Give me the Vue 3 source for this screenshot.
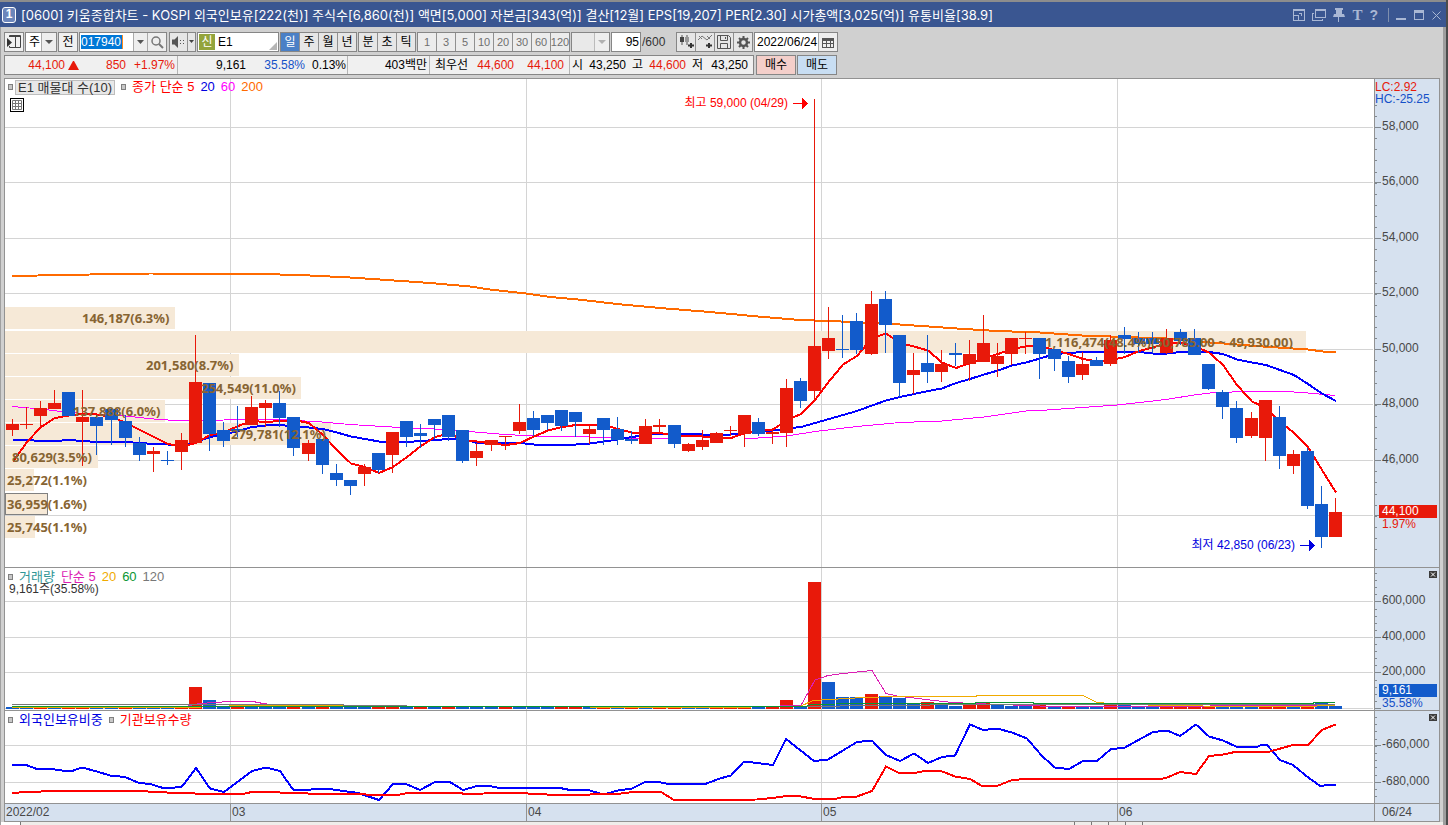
<script setup>
const titleText = '[0600] 키움종합차트 - KOSPI 외국인보유[222(천)] 주식수[6,860(천)] 액면[5,000] 자본금[343(억)] 결산[12월] EPS[19,207] PER[2.30] 시가총액[3,025(억)] 유통비율[38.9]'
const periods = ['일', '주', '월', '년']
const intraday = ['분', '초', '틱']
const intervals = ['1', '3', '5', '10', '20', '30', '60', '120']

const FIRST = 6
const STEP = 1323 / 94
const barX = (i) => Math.round(FIRST + STEP * i)
const midX = (i) => barX(i) + 6

// [direction, body top, body bottom, wick top, wick bottom]
const candles = [
  ['u', 424, 430, 419, 436], ['u', 424, 425, 407, 429], ['u', 408, 416, 401, 427], ['u', 403, 409, 390, 409],
  ['d', 392, 416, 392, 416], ['u', 417, 422, 390, 466], ['d', 417, 426, 415, 455], ['d', 409, 420, 409, 445],
  ['d', 421, 438, 415, 447], ['d', 443, 455, 437, 461], ['u', 451, 454, 447, 472], ['d', 460, 461, 451, 465],
  ['u', 440, 452, 433, 470], ['u', 382, 443, 335, 443], ['d', 383, 434, 383, 451], ['d', 430, 441, 422, 447],
  ['d', 429, 431, 406, 437], ['u', 407, 425, 396, 425], ['u', 403, 408, 400, 427], ['d', 403, 418, 391, 427],
  ['d', 417, 448, 417, 456], ['u', 443, 454, 440, 461], ['d', 439, 465, 439, 474], ['d', 473, 480, 464, 486],
  ['d', 480, 486, 480, 495], ['u', 467, 474, 464, 486], ['d', 453, 470, 453, 473], ['u', 432, 455, 432, 473],
  ['d', 421, 437, 421, 447], ['d', 433, 436, 424, 448], ['d', 419, 425, 419, 439], ['d', 415, 437, 415, 441],
  ['d', 430, 461, 430, 463], ['u', 451, 458, 443, 466], ['u', 440, 445, 440, 451], ['u', 436, 437, 436, 450],
  ['u', 422, 431, 404, 434], ['d', 418, 430, 411, 436], ['d', 415, 423, 415, 430], ['d', 410, 426, 410, 431],
  ['d', 412, 422, 412, 437], ['u', 429, 434, 425, 444], ['d', 418, 430, 418, 445], ['d', 429, 440, 417, 445],
  ['d', 439, 441, 431, 444], ['u', 426, 444, 419, 444], ['u', 425, 427, 419, 433], ['d', 425, 444, 425, 448],
  ['u', 444, 451, 443, 452], ['u', 440, 447, 430, 450], ['u', 433, 443, 432, 443], ['u', 430, 431, 426, 436],
  ['u', 415, 434, 415, 447], ['d', 422, 434, 418, 436], ['u', 432, 434, 428, 444], ['u', 388, 433, 379, 447],
  ['d', 381, 401, 378, 408], ['u', 346, 391, 99, 401], ['u', 338, 351, 307, 359], ['d', 349, 350, 315, 358],
  ['d', 321, 350, 313, 354], ['u', 304, 354, 291, 355], ['d', 299, 325, 291, 353], ['d', 335, 383, 335, 397],
  ['u', 370, 375, 353, 394], ['d', 363, 372, 335, 383], ['u', 364, 372, 350, 382], ['d', 353, 355, 343, 366],
  ['u', 354, 364, 340, 381], ['u', 343, 362, 315, 362], ['u', 356, 364, 343, 377], ['u', 338, 354, 338, 365],
  ['u', 338, 339, 332, 354], ['d', 338, 354, 338, 379], ['d', 349, 359, 349, 371], ['d', 361, 377, 356, 383],
  ['u', 364, 375, 352, 380], ['d', 360, 366, 357, 366], ['u', 340, 364, 335, 366], ['d', 335, 339, 327, 354],
  ['d', 338, 344, 332, 353], ['d', 338, 344, 332, 353], ['u', 338, 353, 329, 354], ['d', 332, 341, 329, 345],
  ['d', 338, 355, 329, 355], ['d', 364, 389, 364, 390], ['d', 392, 407, 390, 419], ['d', 408, 438, 401, 443],
  ['u', 418, 436, 412, 438], ['u', 400, 438, 400, 461], ['d', 417, 456, 406, 469], ['u', 454, 466, 450, 474],
  ['d', 451, 506, 448, 509], ['d', 504, 537, 486, 548], ['u', 512, 537, 498, 537],
]

const ma5 = [461.7, 442, 427, 418, 415.5, 414, 414.5, 417, 423, 430, 437, 444, 446.5, 443, 435, 432.5, 426, 421, 422, 421, 420, 423, 435, 450, 463.5, 467, 473, 467, 457, 446, 437, 433.5, 440, 441.5, 443.5, 445, 443, 436.5, 430.5, 427, 425, 425, 425, 429, 432.5, 433, 433, 435.5, 436, 436.5, 437.5, 438, 433, 430.5, 429.5, 420, 414, 400, 381.5, 364.5, 356, 338, 333.5, 343, 346.5, 350.5, 362.5, 368, 363, 358, 354, 349, 346.5, 345.5, 350.5, 354, 359, 361.5, 360, 357, 351, 347.5, 343, 342.5, 346.5, 352.5, 365, 385, 401.5, 408, 421.5, 433, 447, 470, 492.5]
const ma20 = [440, 440, 441, 441, 440, 441, 442, 442, 442, 443, 444, 444.5, 445, 442, 437, 434.5, 431, 427, 425.5, 425, 426.5, 427.5, 429, 432.5, 436.5, 439, 441.5, 442, 442, 441, 440, 439, 439, 443, 443, 443, 443, 444.5, 445, 445, 444.5, 443.5, 441.5, 439.5, 437, 435, 433.5, 433.5, 434, 434.5, 435, 434.5, 432.5, 431, 430.5, 428.5, 427, 423, 419, 415, 411, 405.5, 400.5, 397, 394, 391, 388.5, 383, 379, 374.5, 370.5, 365.5, 362.5, 358.5, 354, 353, 352, 352, 352.5, 352, 352, 353.5, 353.5, 352, 352, 352, 354, 359.5, 362.5, 365, 370, 375, 384, 393.5, 401]
const perBar = (values) => values.map((v, i) => `${midX(i) + 1},${v}`).join(' ')

const priceLines = [
  { name: 'ma60', points: '12,406.5 41,409 69,412.5 97,414 125,416 154,419 182,421 224,420 280,419.5 322,422 350,424.5 392,427 434,429 463,431 505,434.5 535,436 590,437 632,438.5 675,439 744,439 787,436 815,431.5 857,426.5 900,422.5 942,421 984,417 1026,411 1040,410.5 1117,405 1166,399.5 1194,395 1210,393 1243,391.5 1287,391.5 1308,393 1335,395.5' },
  { name: 'ma200', points: '12,276 90,274.5 150,273.5 260,274 300,275 350,277.5 380,279.5 430,283 470,286.5 490,289.5 526,293.5 550,297 583,300 617,304 660,308 710,312 758,316.5 800,320 830,321 893,324 957,328.5 997,331 1040,332.5 1054,333.5 1082,335.5 1110,336.5 1166,338.5 1210,342.5 1237,344.5 1263,346.5 1293,348.5 1308,349.5 1323,351.5 1336,352' },
  { name: 'ma20', points: perBar(ma20) },
  { name: 'ma5', points: perBar(ma5) },
]

const profile = [
  { y: 307, end: 175, text: '146,187(6.3%)', x: 82 },
  { y: 331, end: 1306, text: '1,116,474(48.4%)(50,785.00 ~ 49,930.00)', x: 1045 },
  { y: 354, end: 239, text: '201,580(8.7%)', x: 146 },
  { y: 377, end: 301, text: '254,549(11.0%)', x: 201 },
  { y: 400, end: 165, text: '137,888(6.0%)', x: 73 },
  { y: 423, end: 331, text: '279,781(12.1%)', x: 231 },
  { y: 446, end: 98, text: '80,629(3.5%)', x: 12 },
  { y: 469, end: 34, text: '25,272(1.1%)', x: 7 },
  { y: 493, end: 48, text: '36,959(1.6%)', x: 7, current: true },
  { y: 516, end: 35, text: '25,745(1.1%)', x: 7 },
]

// direction of each quiet-volume bar, five per block
const quietBars = 'ddudu uddud dduud duddd ududd duudu duddd udddu ududu duudd uuudu'.replace(/ /g, '')
const volumeSpec = {
  13: ['u', 687], 14: ['d', 700], 16: ['u', 705], 55: ['u', 700], 56: ['d', 706], 57: ['u', 582], 58: ['d', 682],
  59: ['d', 697], 60: ['d', 697], 61: ['u', 694], 62: ['d', 696], 63: ['d', 698], 64: ['d', 704], 65: ['u', 702],
  66: ['d', 704], 67: ['d', 706], 68: ['u', 705], 69: ['u', 703], 70: ['d', 705], 71: ['d', 706], 72: ['d', 705],
  73: ['u', 705], 74: ['d', 707], 75: ['u', 707], 76: ['d', 707], 77: ['d', 707], 78: ['u', 705], 79: ['d', 705],
  80: ['d', 706], 81: ['d', 706], 82: ['u', 706], 83: ['u', 706], 84: ['u', 706], 85: ['u', 706], 86: ['d', 706],
  87: ['d', 706], 88: ['d', 707], 89: ['u', 705], 90: ['u', 705], 91: ['d', 706], 92: ['u', 706], 93: ['d', 703], 94: ['d', 706],
}
const volumes = candles.map((_, i) => volumeSpec[i] ?? [quietBars[i], 707])

const volumeLines = [
  { name: 'v5', points: '12,707 187,707 189,705.5 200,703.5 230,701.5 253,701.5 263,703.5 290,707 780,706 801,705.5 815,680 828,675.5 843,673.5 872,670.5 886,693.5 897,696 930,700 952,702.5 986,704 1053,706.5 1203,706.5 1217,705.5 1335,705.5' },
  { name: 'v20', points: '12,707.5 187,707.5 243,705.5 703,707.5 800,706.5 813,700.5 830,699.5 863,697.5 897,696.5 976,696.5 977,695.5 1083,695.5 1097,702.5 1110,703.5 1160,705.5 1245,706.5 1300,706.5 1335,705.5' },
  { name: 'v120', points: '12,704.5 343,704.5 344,705.5 470,706.5 780,706.5 900,705.5 960,704.5 1335,704.5' },
  { name: 'v60', points: '12,706.5 187,706.5 470,706.5 805,706.5 812,704.5 860,703.5 975,703.5 976,702.5 1033,702.5 1034,703.5 1313,703.5 1314,702.5 1335,702.5' },
]

const holdingLines = [
  { name: 'foreign', points: '12,765 26,765 37,769 52,769 65,771 72,771 82,767.5 97,771.5 110,775.5 125,777 138,782.5 152,784.5 163,788 172,788 182,786.5 196,768 210,788.5 224,792 238,781.5 252,771 266,767.5 280,771 293,789.5 307,790 320,788.5 333,789.5 358,793 364,795 379,800 393,784 406,784 420,790 436,781.5 449,781.5 463,790 477,786 489,786 500,788 560,788 570,790 588,790 600,793.5 607,793.5 618,790.5 632,788.5 646,781.5 659,782 668,784 705,784 720,778.5 731,775.5 744,761.5 757,763 773,765 786,739 800,750 814,761 828,759.5 857,742 872,740.5 886,755 900,761 914,753.5 928,763 942,757 955,755.5 970,724.5 983,730 997,728.5 1012,732.5 1027,738.5 1042,756 1055,767.5 1069,769 1083,761 1097,761 1111,749 1124,748 1153,732 1167,730.5 1180,736 1196,724.5 1209,736.5 1223,740.5 1237,747 1257,747 1262,744.5 1267,745 1280,760 1293,765 1307,776.5 1320,786 1328,785 1336,785' },
  { name: 'inst', points: '12,793 27,792 55,791 138,791 167,792.5 195,793.5 245,793.5 252,792 280,792.5 322,794 360,794 372,795 398,795 407,793 462,793 463,794 505,793 518,793 547,794.5 590,794.5 617,794 633,792 661,792 674,800 757,799.5 772,798 787,796 798,796 815,799 835,799 843,797 857,796.5 872,791 886,766.5 898,772.5 917,772.5 925,771 941,771 955,776.5 970,779 982,786 997,786 1012,780 1027,779 1160,779 1166,778 1180,772 1196,774 1209,756 1223,754.5 1235,752 1268,752 1293,745 1308,745 1322,730 1328,727.5 1336,724.5' },
]

const months = [
  { x: 5, text: '2022/02' }, { x: 230, text: '03' }, { x: 526, text: '04' }, { x: 821, text: '05' }, { x: 1117, text: '06' },
]
const monthLines = [230, 526, 821, 1117]

const range = (from, to, step) => {
  const out = []
  for (let v = from; v < to; v += step) out.push(Math.round(v))
  return out
}

const pricePanel = { top: 79, height: 488 }
const volumePanel = { top: 568, height: 142 }
const holdPanel = { top: 711, height: 92 }

const priceGrid = [127, 182, 238, 293, 349, 404, 460, 515]
const priceLabels = ['58,000', '56,000', '54,000', '52,000', '50,000', '48,000', '46,000'].map((text, i) => ({ text, y: priceGrid[i] }))
const priceMinor = range(105, 560, 11.1)
const volumeGrid = [601, 637, 672, 708]
const volumeLabels = ['600,000', '400,000', '200,000'].map((text, i) => ({ text, y: volumeGrid[i] }))
const volumeMinor = range(573, 709, 7.1)
const holdGrid = [745, 782]
const holdLabels = ['-660,000', '-680,000'].map((text, i) => ({ text, y: holdGrid[i] }))
const holdMinor = range(717, 800, 7.2)

const box = (p) => `5 ${p.top} 1369 ${p.height}`
const axisBox = (p) => `0 ${p.top} 64 ${p.height}`
const topOf = (y, p) => `${((y - p.top) / p.height) * 100}%`
const leftOf = (x) => `${((x - 5) / 1369) * 100}%`
const rightOf = (x) => `${((1374 - x) / 1369) * 100}%`
</script>

<template>
  <div class="window">
    <header class="title-bar">
      <span class="badge">1</span>
      <h1>{{ titleText }}</h1>
      <div class="title-tools">
        <button aria-label="화면 크기"><svg width="12" height="12" viewBox="0 0 12 12"><path d="M0 0H12V12H0ZM1 2V11H11V2Z" fill="currentColor" fill-rule="evenodd" /><path d="M1 6H6V11H5V7H1ZM6 4H9V7H8V5H6Z" fill="currentColor" /></svg></button>
        <button aria-label="복제"><svg width="14" height="12" viewBox="0 0 14 12"><path d="M3 0H14V9H3ZM4 2V8H13V2Z" fill="currentColor" fill-rule="evenodd" /><path d="M0 4H2V5H1V11H10V10H11V12H0Z" fill="currentColor" /></svg></button>
        <button aria-label="고정"><svg width="12" height="14" viewBox="0 0 12 14"><path d="M2 0H10V2H9V6H11L12 9H0L1 6H3V2H2ZM5 9H6V14H5Z" fill="currentColor" /></svg></button>
        <button class="serif" aria-label="글꼴">T</button>
        <button class="help" aria-label="도움말">?</button>
        <i class="tool-line"></i>
        <button aria-label="최소화"><svg width="11" height="12" viewBox="0 0 11 12"><path d="M0 9H10V11H0Z" fill="currentColor" /></svg></button>
        <button aria-label="최대화"><svg width="11" height="12" viewBox="0 0 11 12"><path d="M0 1H10V11H0ZM1 4V10H9V4Z" fill="currentColor" fill-rule="evenodd" /></svg></button>
        <button aria-label="닫기"><svg width="9" height="12" viewBox="0 0 9 12"><path d="M.5 2.500L8.500 10.500M8.500 2.500L.5 10.500" stroke="currentColor" /></svg></button>
      </div>
    </header>

    <div class="body">
      <div class="toolbar">
        <button class="tool" aria-label="패널 열기">
          <svg width="15" height="14" viewBox="0 0 15 14"><path d="M2.500 2V.5H13.500V12.500H2.500V11M8.500 2V12M2 1.500H14" fill="none" stroke="#444" /><path d="M0 3V12L5 7.500Z" fill="#333" /></svg>
        </button>
        <div class="combo kind">
          <select aria-label="종목 구분"><option>주</option></select>
          <svg class="arrow" width="15" height="18" viewBox="0 0 15 18"><path d="M.5 0V18" stroke="#aaa" /><path d="M4 7H12L8 11Z" fill="#555" /></svg>
        </div>
        <button class="tool">전</button>
        <div class="field code">
          <input class="code-input" value="017940" aria-label="종목코드" />
          <button class="inner" aria-label="종목 목록"><svg width="9" height="5" viewBox="0 0 9 5"><path d="M1 0H8L4.500 4Z" fill="#555" /></svg></button>
          <button class="inner wide" aria-label="검색"><svg width="13" height="13" viewBox="0 0 13 13"><circle cx="5" cy="5" r="4" fill="none" stroke="#777" stroke-width="1.500" /><path d="M8 8L12 12" stroke="#777" stroke-width="2" /></svg></button>
        </div>
        <div class="group sound">
          <button aria-label="소리"><svg width="14" height="12" viewBox="0 0 14 12"><path d="M0 3.500H2.500L6 0V12L2.500 8.500H0ZM8 4H9V5H8ZM8 7H9V8H8ZM11 4H12V5H11ZM11 7H12V8H11Z" fill="#555" /></svg></button>
          <button class="narrow" aria-label="소리 설정"><svg width="5" height="4" viewBox="0 0 5 4"><path d="M0 0H5L2.500 3Z" fill="#444" /></svg></button>
        </div>
        <div class="field stock"><span class="credit">신</span><span>E1</span><i class="corner"></i></div>
        <div class="group">
          <button v-for="(p, i) in periods" :key="p" :class="{ on: i === 0 }">{{ p }}</button>
        </div>
        <div class="group">
          <button v-for="p in intraday" :key="p">{{ p }}</button>
        </div>
        <div class="group off">
          <button v-for="n in intervals" :key="n" disabled>{{ n }}</button>
        </div>
        <div class="combo gap off">
          <select aria-label="간격" disabled><option></option></select>
          <svg class="arrow" width="15" height="18" viewBox="0 0 15 18"><path d="M.5 0V18" stroke="#bbb" /><path d="M4 7H12L8 11Z" fill="#b0b0b0" /></svg>
        </div>
        <input class="count" value="95" aria-label="표시 개수" />
        <span class="total">/600</span>
        <div class="group icons">
          <button aria-label="차트 유형"><svg width="15" height="14" viewBox="0 0 15 14"><path d="M3 0V10M8 0V10" stroke="#555" /><path d="M1 2H5V7H1Z" fill="#444" /><path d="M6 2H10V7H6Z" fill="#999" /><path d="M9 10.500H15M12 8V13" stroke="#333" stroke-width="2" /></svg></button>
          <button aria-label="지표 추가"><svg width="15" height="14" viewBox="0 0 15 14"><path d="M0 5L4 1L9 5L14 0M1 1L4 4M9 1L12 4" fill="none" stroke="#777" /><path d="M8 10.500H14M11 8V13" stroke="#333" stroke-width="2" /></svg></button>
          <button aria-label="저장"><svg width="14" height="14" viewBox="0 0 14 14"><path d="M.500.500H11.500L13.500 2.500V13.500H.500ZM3.500 1V5.500H10.500V1M3.500 13V8.500H10.500V13M8.500 2V4" fill="none" stroke="#555" /></svg></button>
          <button aria-label="설정"><svg width="13" height="13" viewBox="0 0 13 13"><circle cx="6.500" cy="6.500" r="3.500" fill="none" stroke="#555" stroke-width="2.500" /><path d="M6.500 0V3M6.500 10V13M0 6.500H3M10 6.500H13M2 2L4 4M9 9L11 11M2 11L4 9M9 4L11 2" stroke="#555" stroke-width="2" /></svg></button>
        </div>
        <div class="field date">
          <input value="2022/06/24" aria-label="기준일" />
          <button class="inner wide" aria-label="달력"><svg width="12" height="11" viewBox="0 0 12 11"><path d="M0 1H12V11H0ZM1 4V6H4V4ZM5 4V6H8V4ZM9 4V6H11V4ZM1 7V10H4V7ZM5 7V10H8V7ZM9 7V10H11V7Z" fill="#555" fill-rule="evenodd" /></svg></button>
        </div>
      </div>

      <div class="quote">
        <div class="quote-box">
          <div class="cell c1 up"><span>44,100</span><svg width="11" height="9" viewBox="0 0 11 9"><path d="M5 0H6L11 9H0Z" fill="currentColor" /></svg><span>850</span><span>+1.97%</span></div>
          <div class="cell c2"><span>9,161</span><span class="down">35.58%</span><span>0.13%</span></div>
          <div class="cell c3"><span>403백만</span></div>
          <div class="cell c4"><span>최우선</span><span class="up">44,600</span><span class="up">44,100</span></div>
          <div class="cell c5"><span>시</span><span>43,250</span><span>고</span><span class="up">44,600</span><span>저</span><span>43,250</span></div>
        </div>
        <button class="buy">매수</button>
        <button class="sell">매도</button>
      </div>

      <main class="charts">
        <section class="plot">
          <svg class="canvas" :viewBox="box(pricePanel)" preserveAspectRatio="none" aria-label="가격 차트">
            <rect v-for="x in monthLines" :key="'m' + x" class="grid" :x="x" y="79" width="1" height="488" />
            <rect v-for="y in priceGrid" :key="'g' + y" class="grid" x="5" :y="y" width="1368" height="1" />
            <rect v-for="r in profile" :key="'p' + r.y" :class="['profile', { current: r.current }]" :x="r.current ? 5.5 : 5" :y="r.current ? r.y + 0.5 : r.y" :width="r.end - 5 - (r.current ? 1 : 0)" :height="r.current ? 21 : 22" />
            <polyline v-for="l in priceLines" :key="l.name" :class="l.name" :points="l.points" />
            <g v-for="(c, i) in candles" :key="i" :class="c[0]">
              <rect :x="midX(i)" :y="c[3]" width="1" :height="c[4] - c[3]" />
              <rect :x="barX(i)" :y="c[1]" width="13" :height="c[2] - c[1]" />
            </g>
            <path d="M793 103.500H803" stroke="#f00" /><path d="M802 98L808 103.500L802 109Z" fill="#f00" />
            <path d="M1300 545.500H1310" stroke="#0000e0" /><path d="M1309 540L1315 545.500L1309 551Z" fill="#0000e0" />
          </svg>
          <div class="legend">
            <i class="dot"></i><span class="chip">E1 매물대 수(10)</span><i class="dot"></i>
            <span class="l-red">종가 단순 5</span><span class="l-blue">20</span><span class="l-mag">60</span><span class="l-org">200</span>
          </div>
          <button class="table-btn" aria-label="표 보기"><svg width="10" height="10" viewBox="0 0 10 10"><path d="M.5.5H9.500V9.500H.5ZM3.500 0V10M6.500 0V10M0 3.500H10M0 6.500H10" fill="none" stroke="#777" /></svg></button>
          <span v-for="r in profile" :key="r.y" class="profile-label" :style="{ left: leftOf(r.x), top: topOf(r.y + 11, pricePanel) }">{{ r.text }}</span>
          <span class="mark l-red" :style="{ right: rightOf(788), top: topOf(103, pricePanel) }">최고 59,000 (04/29)</span>
          <span class="mark l-blue" :style="{ right: rightOf(1295), top: topOf(545, pricePanel) }">최저 42,850 (06/23)</span>
        </section>
        <aside class="axis">
          <svg class="canvas" :viewBox="axisBox(pricePanel)" preserveAspectRatio="none">
            <rect v-for="y in priceMinor" :key="y" x="0" :y="y" width="2" height="1" class="tick" />
            <rect v-for="y in priceGrid" :key="'M' + y" x="0" :y="y" width="6" height="1" class="tick" />
          </svg>
          <div class="change"><span class="up">LC:2.92</span><span class="down">HC:-25.25</span></div>
          <span v-for="l in priceLabels" :key="l.y" class="axis-label" :style="{ top: topOf(l.y, pricePanel) }">{{ l.text }}</span>
          <span class="tag tag-up" :style="{ top: topOf(505, pricePanel) }">44,100</span>
          <span class="axis-label up" :style="{ top: topOf(525, pricePanel) }">1.97%</span>
        </aside>

        <section class="plot">
          <svg class="canvas" :viewBox="box(volumePanel)" preserveAspectRatio="none" aria-label="거래량 차트">
            <rect v-for="x in monthLines" :key="'m' + x" class="grid" :x="x" y="568" width="1" height="142" />
            <rect v-for="y in volumeGrid" :key="'g' + y" class="grid" x="5" :y="y" width="1368" height="1" />
            <rect v-for="(v, i) in volumes" :key="i" :class="v[0]" :x="barX(i)" :y="v[1]" width="13" :height="709 - v[1]" />
            <polyline v-for="l in volumeLines" :key="l.name" :class="l.name" :points="l.points" />
          </svg>
          <div class="legend low">
            <i class="dot"></i><span class="l-teal">거래량</span><span class="l-pink">단순 5</span><span class="l-yel">20</span><span class="l-grn">60</span><span class="l-gry">120</span>
          </div>
          <p class="vol-now">9,161주(35.58%)</p>
        </section>
        <aside class="axis">
          <svg class="canvas" :viewBox="axisBox(volumePanel)" preserveAspectRatio="none">
            <rect v-for="y in volumeMinor" :key="y" x="0" :y="y" width="2" height="1" class="tick" />
            <rect v-for="y in volumeGrid" :key="'M' + y" x="0" :y="y" width="6" height="1" class="tick" />
          </svg>
          <button class="close" aria-label="거래량 닫기"><svg width="8" height="7" viewBox="0 0 8 7"><path d="M2 1.500L6 5.500M6 1.500L2 5.500" stroke="#fff" /></svg></button>
          <span v-for="l in volumeLabels" :key="l.y" class="axis-label" :style="{ top: topOf(l.y, volumePanel) }">{{ l.text }}</span>
          <span class="tag tag-down" :style="{ top: topOf(684, volumePanel) }">9,161</span>
          <span class="axis-label down" :style="{ top: topOf(704, volumePanel) }">35.58%</span>
        </aside>

        <section class="plot">
          <svg class="canvas" :viewBox="box(holdPanel)" preserveAspectRatio="none" aria-label="보유 차트">
            <rect v-for="x in monthLines" :key="'m' + x" class="grid" :x="x" y="711" width="1" height="92" />
            <rect v-for="y in holdGrid" :key="'g' + y" class="grid" x="5" :y="y" width="1368" height="1" />
            <polyline v-for="l in holdingLines" :key="l.name" :class="l.name" :points="l.points" />
          </svg>
          <div class="legend low">
            <i class="dot"></i><span class="l-blue">외국인보유비중</span><i class="dot"></i><span class="l-red">기관보유수량</span>
          </div>
        </section>
        <aside class="axis">
          <svg class="canvas" :viewBox="axisBox(holdPanel)" preserveAspectRatio="none">
            <rect v-for="y in holdMinor" :key="y" x="0" :y="y" width="2" height="1" class="tick" />
            <rect v-for="y in holdGrid" :key="'M' + y" x="0" :y="y" width="6" height="1" class="tick" />
          </svg>
          <button class="close" aria-label="보유 닫기"><svg width="8" height="7" viewBox="0 0 8 7"><path d="M2 1.500L6 5.500M6 1.500L2 5.500" stroke="#fff" /></svg></button>
          <span v-for="l in holdLabels" :key="l.y" class="axis-label" :style="{ top: topOf(l.y, holdPanel) }">{{ l.text }}</span>
        </aside>

        <footer class="dates">
          <span v-for="m in months" :key="m.text" class="month" :style="{ left: leftOf(m.x) }">{{ m.text }}</span>
        </footer>
        <div class="today">06/24</div>
      </main>
      <div class="strip"><i class="first"></i><div class="tabs"><i v-for="n in 5" :key="n"></i></div></div>
    </div>
  </div>
</template>

<style>
html, body { height: 100%; }
#app { height: 100%; }
</style>

<style scoped>
* { box-sizing: border-box; }
.window {
  display: flex; flex-direction: column; height: 100vh; min-height: 500px; min-width: 900px;
  background: #d0d0d0; border-right: 2px solid #4c4c4c; color: #000; overflow: hidden;
  font: 12px/14px "Liberation Sans", "Noto Sans CJK KR", sans-serif;
}
button, input, select { font: inherit; color: inherit; margin: 0; padding: 0; border: 0; border-radius: 0; background: none; }
button { display: inline-flex; align-items: center; justify-content: center; white-space: nowrap; }
.title-bar {
  display: flex; align-items: center; height: 27px; flex: none; padding: 0 5px 0 2px;
  background: #3a5691; border-top: 2px solid #8d8d8d; color: #fff;
}
.badge {
  width: 14px; height: 16px; line-height: 13px; text-align: center; font-weight: bold; font-size: 12px;
  border: 1px solid #fff; border-radius: 3px; background: #6c86bb;
}
h1 {
  flex: 1; margin: 0 0 0 5px; font: 13px/16px Inter, "Noto Sans CJK KR", sans-serif;
  white-space: nowrap; overflow: hidden;
}
.title-tools { display: flex; align-items: center; gap: 7px; color: #a9b7d4; }
.title-tools button { height: 14px; }
.title-tools .serif { font: bold 15px/14px "Liberation Serif", serif; }
.title-tools .help { font: bold 14px/14px "Liberation Sans", sans-serif; }
.tool-line { width: 1px; height: 14px; background: #7f8fae; margin: 0 0 0 3px; }
.body { flex: 1; display: flex; flex-direction: column; min-height: 0; border-right: 3px solid #9e9e9e; border-left: 1px solid #a0a0a0; }
.toolbar { display: flex; align-items: center; gap: 1px; height: 20px; flex: none; margin: 5px 0 0 3px; }
.toolbar > * { height: 20px; flex: none; border: 1px solid #868686; background: #f0f0f0; }
.tool { width: 20px; }
.kind { width: 32px; }
.gap { width: 39px; }
.combo { position: relative; background: #fff; }
.combo select { appearance: none; width: 100%; height: 18px; padding-left: 3px; background: #fff; }
.combo.off select { background: #e9e9e9; opacity: 1; }
.arrow { position: absolute; right: 0; top: 0; background: #eee; pointer-events: none; }
.field { display: flex; align-items: center; background: #fff; }
.code { width: 88px; padding-left: 1px; }
.code-input { width: 42px; height: 14px; margin-right: auto; background: #0078d7; color: #fff; border-right: 1px solid #ff8a1e; }
.inner { width: 14px; height: 18px; border-left: 1px solid #aaa; background: #eee; }
.inner.wide { width: 19px; }
.group { display: flex; }
.group button { width: 19px; height: 18px; background: #e6e6e6; border-left: 1px solid #909090; }
.group button:first-child { width: 18px; border-left: 0; }
.group button.on { background: #4a80c6; color: #fff; }
.group.off button { background: #ececec; color: #6f6f6f; font-size: 11px; }
.group.sound { width: 27px; margin-left: 1px; }
.group.sound button:first-child { width: 17px; }
.group.sound .narrow { width: 8px; }
.stock { width: 82px; gap: 3px; padding-left: 1px; position: relative; }
.credit { width: 16px; height: 16px; line-height: 16px; text-align: center; background: #93a43c; color: #fff; }
.corner { position: absolute; right: 1px; bottom: 1px; border: 4px solid; border-color: transparent #b5b5b5 #b5b5b5 transparent; }
.toolbar > .count { width: 30px; text-align: right; padding-right: 1px; background: #fff; }
.toolbar > .total { border: 0; background: none; line-height: 20px; width: 33px; color: #333; }
.date { width: 84px; }
.date input { height: 18px; padding-left: 2px; flex: 1; min-width: 0; }
.quote { display: flex; gap: 1px; height: 20px; flex: none; margin: 3px 0 0 3px; }
.quote-box { display: flex; width: 750px; border: 1px solid #868686; background: #f0f0f0; line-height: 18px; text-align: right; }
.cell { display: grid; border-right: 1px solid #b4b4b4; align-items: center; white-space: nowrap; }
.cell:last-child { border-right: 0; }
.cell span { display: block; }
.c1 { width: 173px; grid-template-columns: 60px 14px 47px 49px; }
.c1 svg { justify-self: end; }
.c2 { width: 170px; grid-template-columns: 68px 59px 41px; }
.c3 { width: 82px; padding-right: 2px; }
.c4 { width: 140px; grid-template-columns: 38px 46px 50px; }
.c5 { width: 183px; grid-template-columns: 13px 43px 17px 43px 17px 45px; }
.up { color: #e7190a; }
.down { color: #1450c8; }
.quote button { width: 40px; border: 1px solid #868686; }
.quote .buy { background: #f4cfca; margin-left: 1px; }
.quote .sell { background: #c8def3; }
.charts {
  flex: 1; min-height: 0; margin: 3px 3px 0 3px; display: grid;
  grid-template-columns: minmax(0, 1fr) 66px;
  grid-template-rows: minmax(0, 489fr) minmax(0, 143fr) minmax(0, 93fr) 18px;
  border: 1px solid #929292; border-width: 1px 0 0 1px; background: #fff;
}
.plot, .axis { position: relative; border-bottom: 1px solid #929292; min-height: 0; }
.axis, .today { background: #d6e1ef; border-left: 1px solid #929292; border-right: 1px solid #929292; }
.canvas { position: absolute; inset: 0; width: 100%; height: 100%; shape-rendering: crispEdges; }
.grid { fill: #d4d4d4; }
.tick { fill: #808890; }
.profile { fill: #f6e9d7; }
.profile.current { stroke: #808080; }
polyline { fill: none; stroke-width: 1; }
.ma5 { stroke: #f00; stroke-width: 2; }
.ma20 { stroke: #00f; stroke-width: 2; }
.ma60 { stroke: #f0f; }
.ma200 { stroke: #ff6a00; stroke-width: 2; }
.u { fill: #e8190a; }
.d { fill: #125bcb; }
.v5 { stroke: #dc1eb4; }
.v20 { stroke: #f0aa00; }
.v60 { stroke: #0a9632; }
.v120 { stroke: #787878; }
.foreign { stroke: #00f; stroke-width: 2; }
.inst { stroke: #f00; stroke-width: 2; }
.legend { position: relative; display: flex; align-items: center; gap: 6px; height: 15px; padding: 1px 0 0 3px; white-space: nowrap; font-size: 13px; }
.legend .dot { width: 5px; height: 6px; border: 1px solid #808080; background: #c8c8c8; }
.chip { height: 15px; line-height: 13px; padding: 0 2px; margin-left: -4px; background: #e8e8e8; border: 1px solid #bdbdbd; color: #333; }
.legend.low { padding-top: 2px; }
.l-red { color: #f00; }
.l-blue { color: #0000e0; }
.l-mag { color: #f0f; }
.l-org { color: #ff6a00; }
.l-teal { color: #2f9696; }
.l-pink { color: #dc1eb4; }
.l-yel { color: #f0aa00; }
.l-grn { color: #0a9632; }
.l-gry { color: #787878; }
.table-btn { position: relative; width: 14px; height: 14px; margin: 4px 0 0 5px; border: 1px solid #000; background: #fff; display: flex; }
.vol-now { position: relative; margin: 0 0 0 4px; line-height: 13px; color: #333; }
.profile-label, .mark { position: absolute; white-space: nowrap; line-height: 14px; margin-top: -7px; }
.profile-label { font: bold 13px/14px "Noto Sans", "Liberation Sans", sans-serif; color: #876432; }
.axis-label { position: absolute; left: 7px; margin-top: -8px; line-height: 14px; color: #484848; }
.axis-label.up { color: #e7190a; }
.axis-label.down { color: #1450c8; }
.change { position: relative; display: flex; flex-direction: column; line-height: 12px; padding-top: 2px; }
.tag { position: absolute; left: 4px; right: 2px; height: 13px; line-height: 13px; padding-left: 3px; color: #fff; }
.tag-up { background: #e8190a; }
.tag-down { background: #125bcb; }
.close { position: absolute; right: 2px; top: 3px; width: 8px; height: 7px; background: #3c3c3c; }
.dates { position: relative; background: #d6e1ef; border-bottom: 1px solid #929292; color: #484848; }
.month { position: absolute; top: 0; height: 17px; line-height: 16px; padding-left: 1px; border-left: 1px solid #929292; }
.month:first-child { border-left: 0; }
.today { border-bottom: 1px solid #929292; line-height: 16px; padding-left: 7px; color: #484848; }
.strip { display: flex; justify-content: space-between; height: 3px; flex: none; background: #efedea; }
.strip i { width: 17px; height: 3px; border-right: 1px solid #777; }
.strip .first { width: 20px; background: #fff; }
.tabs { display: flex; margin-right: 300px; }
</style>
